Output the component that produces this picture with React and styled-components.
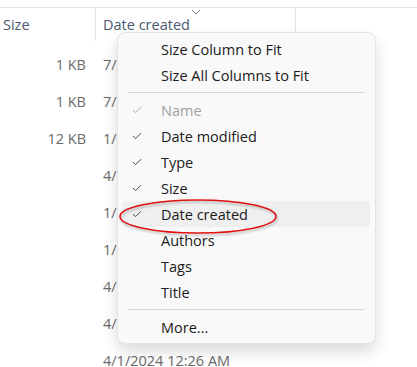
import React from 'react';
import styled, { createGlobalStyle } from 'styled-components';

const GlobalStyle = createGlobalStyle`
  html, body {
    margin: 0;
    padding: 0;
    background: #ffffff;
    font-family: "Open Sans", "Noto Sans", sans-serif;
  }
`;

const Page = styled.div`
  position: relative;
  width: 417px;
  height: 367px;
  overflow: hidden;
  background: #ffffff;
  padding-top: 7px;
  box-sizing: border-box;
`;

const Header = styled.div`
  display: flex;
  height: 33px;
  border-top: 1px solid #e5e5e5;
`;

const HeaderCell = styled.div`
  position: relative;
  width: ${({ width }) => width}px;
  box-sizing: border-box;
  padding-left: ${({ pad }) => pad}px;
  display: flex;
  align-items: center;
  font-size: 14.5px;
  color: #4a5a70;
  border-right: ${({ divider }) => (divider ? '1px solid #e5e5e5' : 'none')};
`;

const SortChevron = styled.svg`
  position: absolute;
  top: 1px;
  left: 95px;
`;

const Rows = styled.div`
  display: flex;
  flex-direction: column;
  padding-top: 5px;
`;

const Row = styled.div`
  display: flex;
  height: 37px;
  align-items: center;
  font-size: 14.5px;
  color: #6b6b6b;
`;

const SizeCell = styled.div`
  width: 86px;
  text-align: right;
  box-sizing: border-box;
`;

const DateCell = styled.div`
  padding-left: 17px;
`;

const Menu = styled.div`
  position: absolute;
  left: 117px;
  top: 32px;
  width: 259px;
  box-sizing: border-box;
  padding: 3px 5px;
  background: #f9f9f9;
  border: 1px solid #e3e3e3;
  border-radius: 8px;
  box-shadow: 0 8px 16px rgba(0, 0, 0, 0.14);
  display: flex;
  flex-direction: column;
`;

const Item = styled.div`
  display: flex;
  align-items: center;
  height: 26px;
  padding-left: 9px;
  border-radius: 4px;
  font-size: 14.5px;
  color: ${({ disabled }) => (disabled ? '#a0a0a0' : '#1b1b1b')};
  background: ${({ active }) => (active ? '#efefef' : 'transparent')};
`;

const CheckSlot = styled.span`
  width: 29px;
  display: flex;
  align-items: center;
`;

const Separator = styled.div`
  height: 1px;
  background: #d9d9d9;
  margin: 4px 5px;
`;

const Ring = styled.svg`
  position: absolute;
  left: 117px;
  top: 195px;
  filter: drop-shadow(1px 2px 1px rgba(0, 0, 0, 0.25));
`;

const Check = ({ color }) => (
  <svg width="10" height="8" viewBox="0 0 10 8">
    <path d="M1 4.2 L3.6 6.6 L9 1.2" fill="none" stroke={color} strokeWidth="1" />
  </svg>
);

const rows = [
  ['1 KB', '7/'],
  ['1 KB', '7/'],
  ['12 KB', '1/'],
  ['', '4/'],
  ['', '1/'],
  ['', '1/'],
  ['', '4/'],
  ['', '4/'],
  ['', '4/1/2024 12:26 AM'],
];

const items = [
  { label: 'Name', checked: true, disabled: true },
  { label: 'Date modified', checked: true },
  { label: 'Type', checked: true },
  { label: 'Size', checked: true },
  { label: 'Date created', checked: true, active: true },
  { label: 'Authors' },
  { label: 'Tags' },
  { label: 'Title' },
];

export default function App() {
  return (
    <Page>
      <GlobalStyle />
      <Header>
        <HeaderCell width={96} pad={3} divider>Size</HeaderCell>
        <HeaderCell width={200} pad={7} divider>
          Date created
          <SortChevron width="10" height="6" viewBox="0 0 10 6">
            <path d="M1 1 L5 5 L9 1" fill="none" stroke="#7a7a7a" strokeWidth="1" />
          </SortChevron>
        </HeaderCell>
      </Header>
      <Rows>
        {rows.map(([size, date], i) => (
          <Row key={i}>
            <SizeCell>{size}</SizeCell>
            <DateCell>{date}</DateCell>
          </Row>
        ))}
      </Rows>

      <Menu>
        <Item><CheckSlot />Size Column to Fit</Item>
        <Item><CheckSlot />Size All Columns to Fit</Item>
        <Separator />
        {items.map((it) => (
          <Item key={it.label} disabled={it.disabled} active={it.active}>
            <CheckSlot>{it.checked && <Check color={it.disabled ? '#a8a8a8' : '#4a4a4a'} />}</CheckSlot>
            {it.label}
          </Item>
        ))}
        <Separator />
        <Item><CheckSlot />More...</Item>
      </Menu>

      <Ring width="164" height="42" viewBox="0 0 164 42">
        <ellipse cx="81" cy="21.5" rx="78" ry="16.5" fill="none" stroke="#e01010" strokeWidth="1.6" />
      </Ring>
    </Page>
  );
}
